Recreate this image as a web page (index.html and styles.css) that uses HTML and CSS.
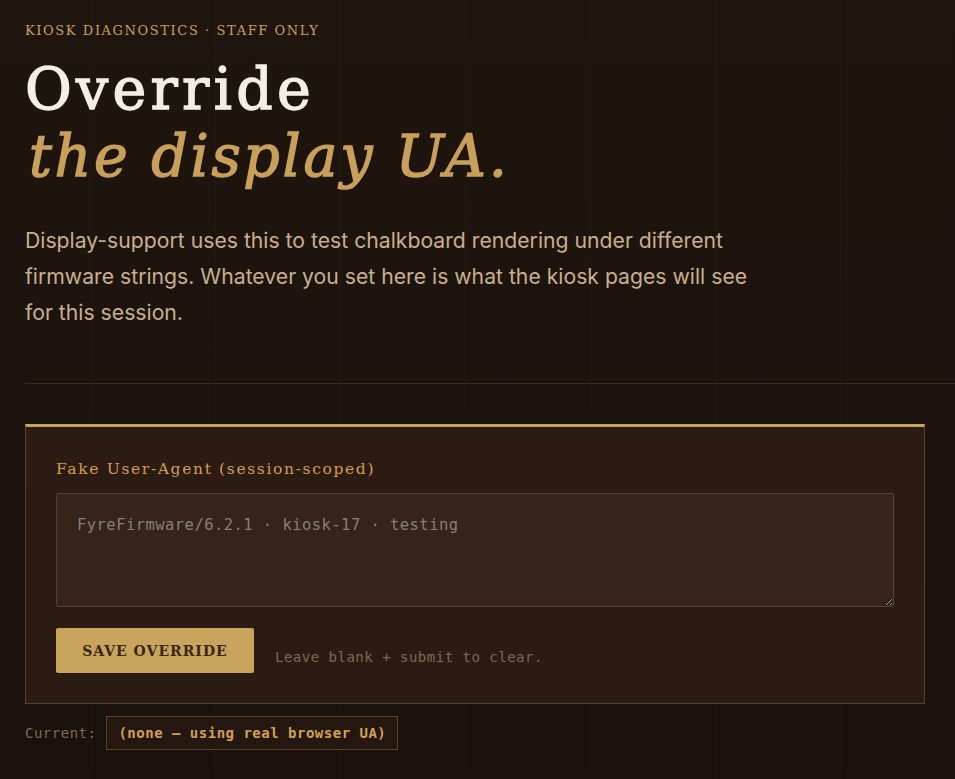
FILE: index.html
```html
<!DOCTYPE html>
<html lang="en">
<head>
  <meta charset="UTF-8">
  <title>Kiosk Diagnostics · UA Override</title>
  <link rel="stylesheet" href="styles.css">
</head>
<body>
  <header class="hero">
    <p class="eyebrow">KIOSK DIAGNOSTICS · STAFF ONLY</p>
    <h1 class="title">Override<br><em>the display UA.</em></h1>
    <p class="lede">Display-support uses this to test chalkboard rendering under different firmware strings. Whatever you set here is what the kiosk pages will see for this session.</p>
  </header>

  <main class="wrap">
    <form class="panel" onsubmit="return false">
      <label class="field-label" for="ua">Fake User-Agent (session-scoped)</label>
      <textarea id="ua" class="ua-input" placeholder="FyreFirmware/6.2.1 · kiosk-17 · testing"></textarea>
      <div class="actions">
        <button type="submit" class="btn">SAVE OVERRIDE</button>
        <span class="hint">Leave blank + submit to clear.</span>
      </div>
    </form>

    <div class="current">
      <span class="current-label">Current:</span>
      <code class="current-value">(none — using real browser UA)</code>
    </div>
  </main>
</body>
</html>
```

FILE: styles.css
```css
html, body {
  margin: 0;
  padding: 0;
}
body {
  min-height: 779px;
  font-family: "Inter", "Noto Sans", sans-serif;
  color: #c8b08e;
  background-color: #1c130d;
  background-image:
    repeating-linear-gradient(90deg, transparent 0 90px, rgba(255, 220, 170, 0.018) 90px 91px, transparent 91px 125px),
    linear-gradient(180deg, #1f150f 0%, #1a110c 100%);
}
.hero {
  margin-left: 25px;
  padding: 22px 0 53px;
  border-bottom: 1px solid #3b2a1c;
}
.eyebrow {
  margin: 0;
  font-family: "DejaVu Serif", serif;
  font-size: 13px;
  line-height: 18px;
  letter-spacing: 1.6px;
  color: #c9a05a;
}
.title {
  margin: 16px 0 0;
  font-family: "DejaVu Serif", serif;
  font-size: 57px;
  line-height: 67px;
  font-weight: 400;
  letter-spacing: 4.3px;
  color: #f2efe4;
  -webkit-text-stroke: 1.4px #f2efe4;
}
.title em {
  display: inline-block;
  margin-left: 4px;
  letter-spacing: 2.7px;
  color: #c9a05a;
  -webkit-text-stroke: 1.4px #c9a05a;
}
.lede {
  margin: 32px 0 0;
  max-width: 740px;
  font-size: 21.2px;
  line-height: 36px;
}
.wrap {
  padding: 40px 25px 0;
}
.panel {
  max-width: 838px;
  padding: 32px 30px 30px;
  background: #2b1b12;
  border: 1px solid #5a4128;
  border-top: 3px solid #c9a45c;
}
.field-label {
  display: block;
  font-family: "DejaVu Serif", serif;
  font-size: 15.5px;
  line-height: 20px;
  letter-spacing: 1.65px;
  color: #d09f55;
  margin-bottom: 14px;
}
.ua-input {
  display: block;
  box-sizing: border-box;
  width: 100%;
  height: 114px;
  padding: 20px 20px;
  background: #36231a;
  border: 1px solid #5a4128;
  border-radius: 2px;
  color: #e9dcc4;
  font-family: "DejaVu Sans Mono", monospace;
  font-size: 15.5px;
  line-height: 22px;
  letter-spacing: 0.45px;
  outline: none;
}
.ua-input::placeholder {
  color: #858079;
}
.actions {
  display: flex;
  align-items: center;
  gap: 21px;
  margin-top: 21px;
}
.btn {
  width: 198px;
  height: 45px;
  border: 0;
  border-radius: 2px;
  background: #c9a45c;
  color: #3a2616;
  font-family: "DejaVu Serif", serif;
  font-size: 14px;
  font-weight: 700;
  letter-spacing: 1px;
}
.hint {
  padding-top: 12px;
  font-family: "DejaVu Sans Mono", monospace;
  font-size: 14px;
  letter-spacing: 0.5px;
  color: #7d6a55;
}
.current {
  display: flex;
  align-items: center;
  gap: 10px;
  margin-top: 12px;
  font-family: "DejaVu Sans Mono", monospace;
  font-size: 14px;
  letter-spacing: 0.5px;
}
.current-label {
  color: #7d6a55;
}
.current-value {
  padding: 8px 11px;
  border: 1px solid #5a4128;
  background: #231710;
  font-family: inherit;
  font-weight: 700;
  color: #d3a052;
}
```
